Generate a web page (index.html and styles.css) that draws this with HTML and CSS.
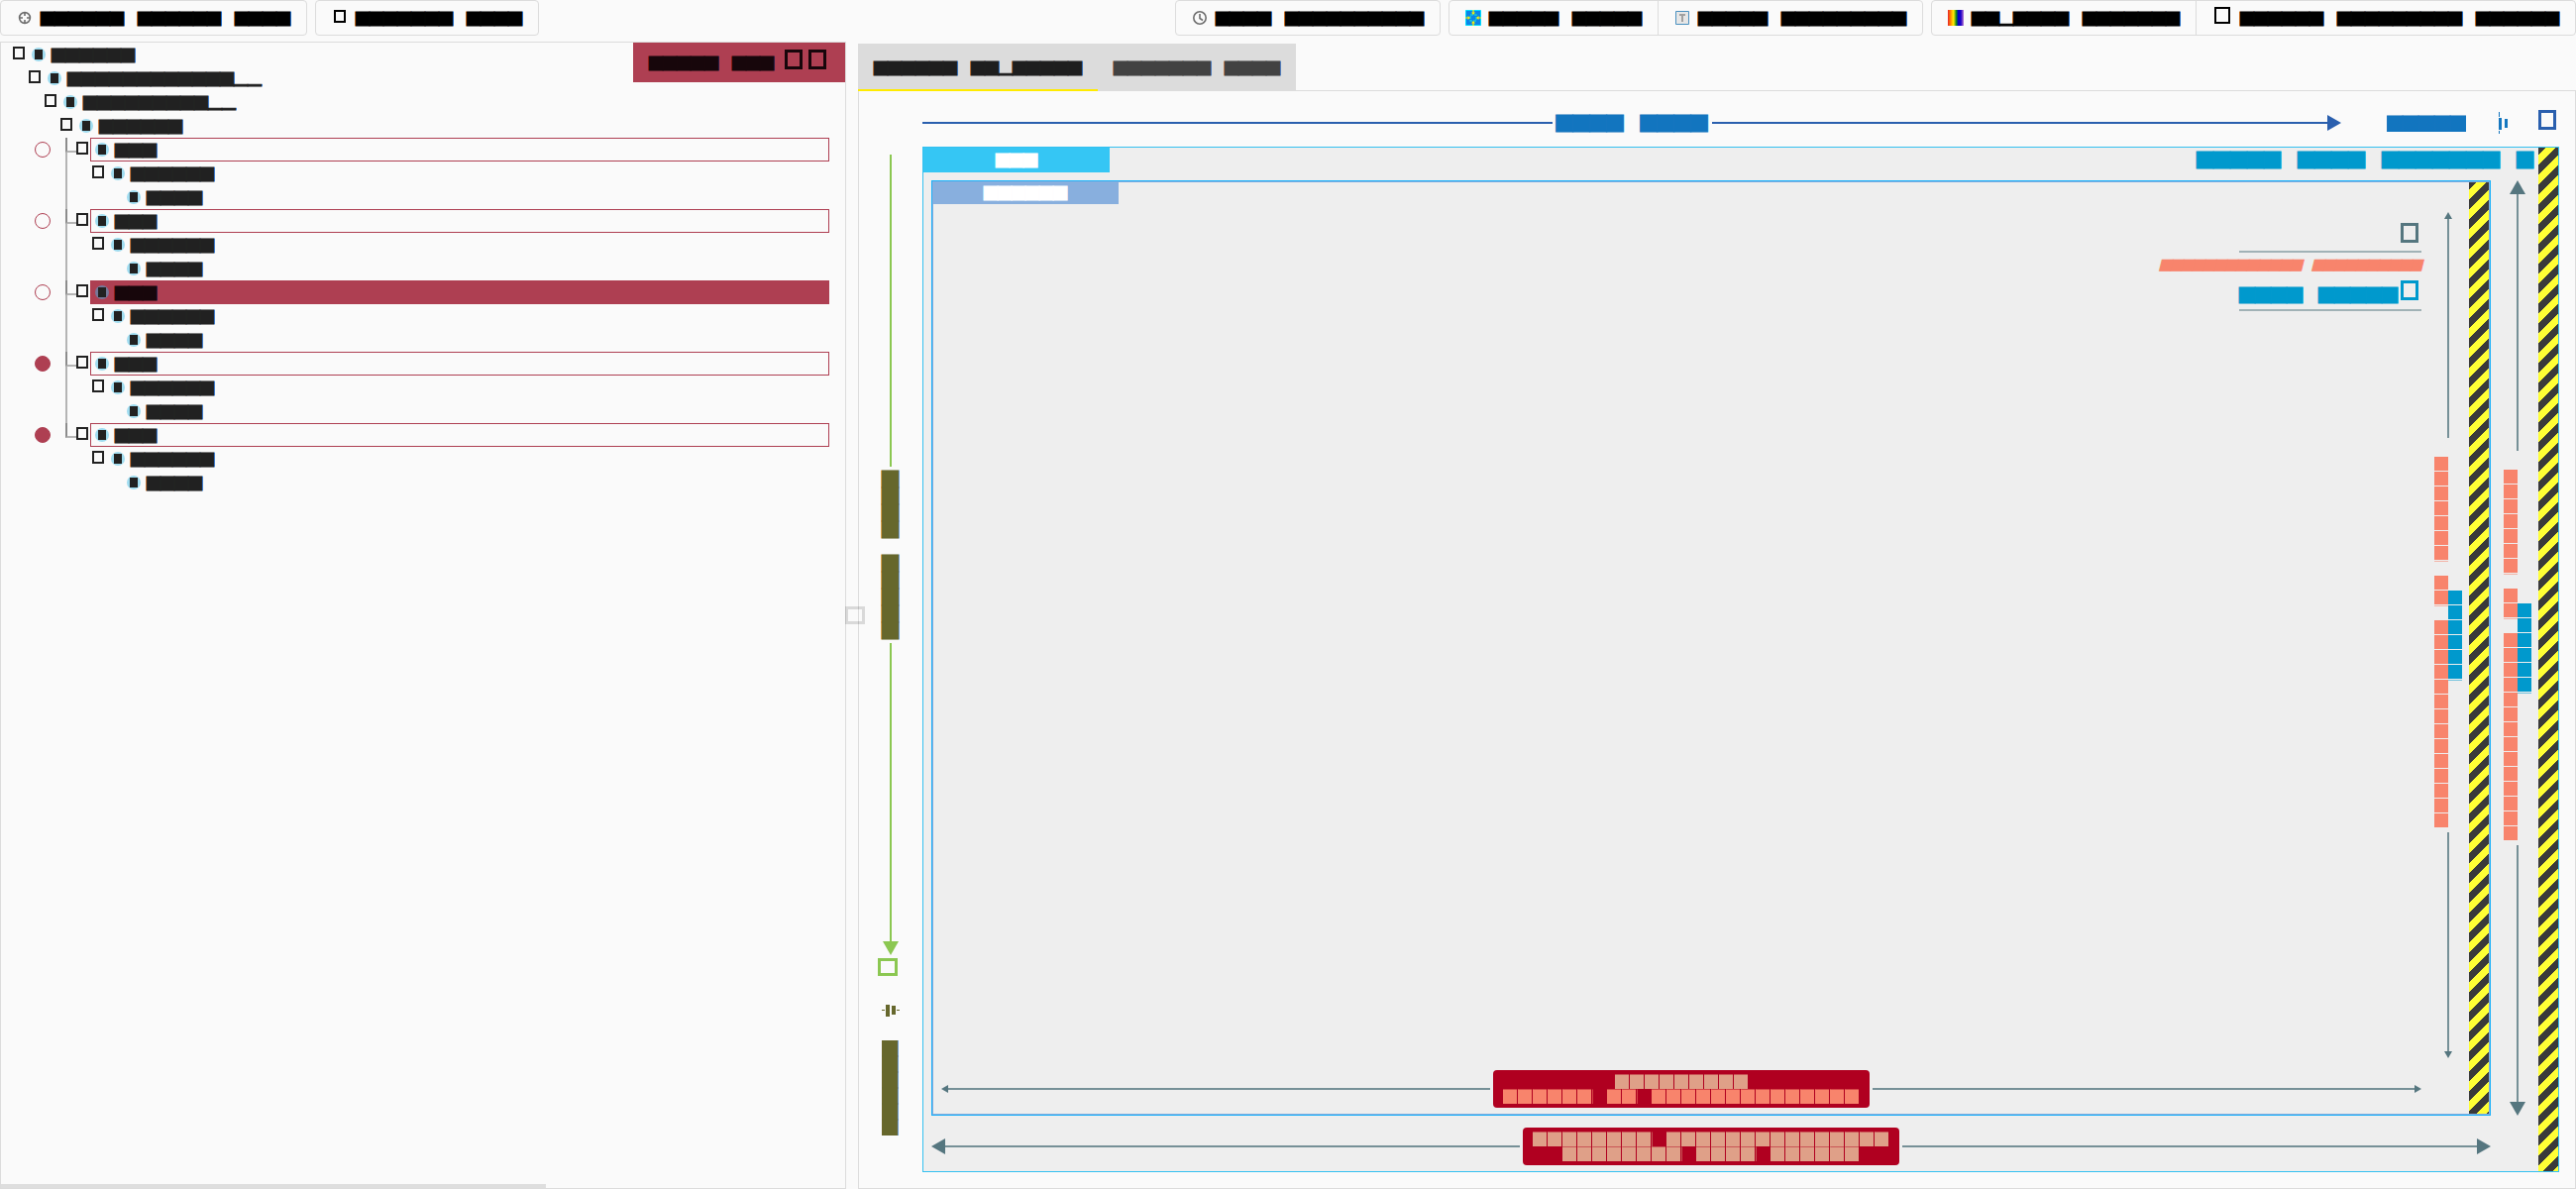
FILE: index.html
```html
<!DOCTYPE html>
<html lang="en">
<head>
<meta charset="utf-8">
<title>Inspector</title>
<link rel="stylesheet" href="styles.css">
</head>
<body>
<header class="toolbar">
  <div class="group"><button class="tool"><svg class="icon" viewBox="0 0 16 16"><g fill="none" stroke="#6e6e6e" stroke-width="1.6"><circle cx="8" cy="8" r="5.4"/><path d="M8 2v4M8 10v4M2 8h4M10 8h4"/></g></svg><span>██████　██████　████</span></button></div>
  <div class="group"><button class="tool"><span class="icon"><span class="box"></span></span><span>███████　████</span></button></div>
  <div class="spacer"></div>
  <div class="group"><button class="tool"><svg class="icon" viewBox="0 0 16 16"><g fill="none" stroke="#6e6e6e" stroke-width="1.6"><circle cx="8" cy="8" r="6.2"/><path d="M8 4v4.5l3 2"/></g></svg><span>████　██████████</span></button></div>
  <div class="group">
    <button class="tool"><svg class="icon" viewBox="0 0 16 16"><path fill="#0a84e8" stroke="#00e0ff" d="M.5.5h15v15H.5z"/><path fill="none" stroke="#16c8d8" stroke-width="1.4" stroke-dasharray="3 1" d="M5 5h6v6H5z"/><path fill="#fff000" d="M7.4 0h1.2v2.500H10L8 5 6 2.500h1.400zM7.400 16h1.200v-2.500H10L8 11l-2 2.500h1.400zM0 7.400h2.500V6L5 8l-2.500 2V8.600H0zM16 7.400h-2.500V6L11 8l2.500 2V8.600H16z"/></svg><span>█████　█████</span></button>
    <button class="tool"><svg class="icon" viewBox="0 0 16 16"><path fill="#e6e6e6" stroke="#4a90c0" d="M1.500 1.500h13v13h-13z"/><path fill="#a0a0a0" d="M5 4h6v2H9v6H7V6H5z"/></svg><span>█████　█████████</span></button>
  </div>
  <div class="group">
    <button class="tool"><span class="icon rainbow"></span><span>██▁████　███████</span></button>
    <button class="tool wide"><span class="icon"><span class="box large"></span></span><span>██████　█████████　██████</span></button>
  </div>
</header>
<main class="split">
  <section class="tree-panel">
    <ul class="tree">
      <li class="row l0"><span class="box"></span><span class="label"><i class="dot"></i>██████</span></li>
      <li class="row l1"><span class="box"></span><span class="label"><i class="dot"></i>████████████▁▁</span></li>
      <li class="row l2"><span class="box"></span><span class="label"><i class="dot"></i>█████████▁▁</span></li>
      <li class="row l3"><span class="box"></span><span class="label"><i class="dot"></i>██████</span></li>
      <li class="row child"><span class="mark"></span><span class="box"></span><span class="label"><i class="dot"></i>███</span></li>
      <li class="row l5 rail"><span class="box"></span><span class="label"><i class="dot"></i>██████</span></li>
      <li class="row l6 rail"><span class="label"><i class="dot"></i>████</span></li>
      <li class="row child"><span class="mark"></span><span class="box"></span><span class="label"><i class="dot"></i>███</span></li>
      <li class="row l5 rail"><span class="box"></span><span class="label"><i class="dot"></i>██████</span></li>
      <li class="row l6 rail"><span class="label"><i class="dot"></i>████</span></li>
      <li class="row child selected"><span class="mark"></span><span class="box"></span><span class="label"><i class="dot"></i>███</span></li>
      <li class="row l5 rail"><span class="box"></span><span class="label"><i class="dot"></i>██████</span></li>
      <li class="row l6 rail"><span class="label"><i class="dot"></i>████</span></li>
      <li class="row child"><span class="mark full"></span><span class="box"></span><span class="label"><i class="dot"></i>███</span></li>
      <li class="row l5 rail"><span class="box"></span><span class="label"><i class="dot"></i>██████</span></li>
      <li class="row l6 rail"><span class="label"><i class="dot"></i>████</span></li>
      <li class="row child last"><span class="mark full"></span><span class="box"></span><span class="label"><i class="dot"></i>███</span></li>
      <li class="row l5"><span class="box"></span><span class="label"><i class="dot"></i>██████</span></li>
      <li class="row l6"><span class="label"><i class="dot"></i>████</span></li>
    </ul>
    <button class="follow"><span>█████　███</span><span class="box"></span><span class="box"></span></button>
    <div class="scrollbar"></div>
  </section>
  <div class="divider"><span class="box"></span></div>
  <section class="details">
    <nav class="tabs">
      <button class="tab active">██████　██▁█████</button>
      <button class="tab">███████　████</button>
    </nav>
    <div class="explorer">
      <div class="main-axis">
        <div class="run"><i class="line"></i></div><span class="axis-name">████　████</span><div class="run"><i class="line"></i><i class="head right"></i></div>
        <div class="align">
          <select aria-label="Main axis alignment"><option>█████</option></select>
          <svg width="10" height="22" viewBox="0 0 10 22"><path fill="#1677bf" d="M0 0h1v5H0zM0 6h3v12H0zM0 19h1v3H0zM6 7h3v9H6z"/></svg>
          <span class="box"></span>
        </div>
      </div>
      <div class="cross-axis">
        <div class="run"><i class="line"></i></div><span class="axis-name">████　█████</span><div class="run"><i class="line"></i><i class="head down"></i></div>
        <span class="box"></span>
        <svg width="18" height="12" viewBox="0 0 18 12"><path fill="#66672c" d="M0 5h3v1H0zM4 0h4v12H4zM10 1h4v9h-4zM15 5h3v1h-3z"/></svg>
        <select aria-label="Cross axis alignment"><option>██████</option></select>
      </div>
      <div class="outer">
        <div class="outer-head"><h2 class="title">███</h2><span class="factor">█████　████　███████　█</span></div>
        <div class="inner">
          <div class="inner-body">
            <h3 class="title">██████</h3>
            <div class="flex-info">
              <span class="box"></span>
              <hr>
              <em>█████████████　██████████</em>
              <span class="fit">████　█████<span class="box"></span></span>
              <hr>
            </div>
          </div>
          <div class="dim v small">
            <i class="head up"></i><i class="line"></i>
            <p class="size"><span class="blue">██████</span><span>　███████　██　██████████████</span></p>
            <i class="line"></i><i class="head down"></i>
          </div>
          <div class="dim h small">
            <i class="head left"></i><i class="line"></i>
            <p class="size"><span class="sand">█████████</span><span>██████　██　██████████████</span></p>
            <i class="line"></i><i class="head right"></i>
          </div>
          <div class="stripes"></div>
        </div>
        <div class="dim v large">
          <i class="head up"></i><i class="line"></i>
          <p class="size"><span class="blue">██████</span><span>　███████　██　██████████████</span></p>
          <i class="line"></i><i class="head down"></i>
        </div>
        <div class="dim h large">
          <i class="head left"></i><i class="line"></i>
          <p class="size"><span class="sand">████████　███████████████</span><span class="sand">████████　████　██████</span></p>
          <i class="line"></i><i class="head right"></i>
        </div>
        <div class="stripes"></div>
      </div>
    </div>
  </section>
</main>
</body>
</html>
```
FILE: styles.css
```css
* { box-sizing: border-box; }
body {
  margin: 0;
  min-height: 100vh;
  display: flex;
  flex-direction: column;
  background: #fafafa;
  color: #212121;
  font: 14px/16px "Noto Sans CJK JP", sans-serif;
  -webkit-text-stroke: 1px;
}
button, select {
  appearance: none;
  margin: 0;
  padding: 0;
  border: 0;
  border-radius: 0;
  background: none;
  color: inherit;
  font: inherit;
  white-space: nowrap;
}
ul, p, h2, h3 { margin: 0; padding: 0; font: inherit; }
i { font-style: normal; }
.box { flex: none; width: 12px; height: 13px; border: 2px solid; }

/* Toolbar */
.toolbar { display: flex; gap: 8px; height: 36px; margin-bottom: 6px; color: #000; }
.spacer { flex: 1; }
.group { display: flex; border: 1px solid #dcdcdc; border-radius: 4px; }
.tool { display: flex; align-items: center; gap: 8px; padding: 0 16px; -webkit-text-stroke: 1px; }
.tool + .tool { border-left: 1px solid #dcdcdc; }
.tool.wide { gap: 10px; padding-left: 18px; }
.icon { display: flex; flex: none; align-items: center; justify-content: center; width: 16px; height: 16px; }
.icon .box { margin-bottom: 3px; }
.icon .large { width: 16px; height: 17px; margin-bottom: 5px; }
.rainbow { background: linear-gradient(90deg, #e8202a, #ff8c00 18%, #fff000 36%, #0a8020 54%, #0000c8 66%, #2000c8 82%, #c080d0); }

.split { flex: 1; display: grid; grid-template-columns: 854px 12px 1fr; }

/* Widget tree */
.tree-panel { position: relative; border: 1px solid #dcdcdc; }
.tree { list-style: none; }
.row { position: relative; display: flex; align-items: center; height: 24px; padding: 0 16px 0 12px; }
.row > .box { margin-right: 2px; margin-bottom: 3px; }
.label { flex: 1; display: flex; align-items: center; gap: 6px; height: 24px; padding-left: 5px; }
.dot { width: 14px; height: 14px; border-radius: 7px; background: linear-gradient(#212121, #212121) center / 8px 10px no-repeat #9fdcf0; }
.l1 { padding-left: 28px; }
.l2 { padding-left: 44px; }
.l3 { padding-left: 60px; }
.l5 { padding-left: 92px; }
.l6 { padding-left: 122px; }
.child { padding-left: 34px; }
.mark { width: 16px; height: 16px; margin-right: 26px; border: 1px solid #ae3f52; border-radius: 8px; }
.mark.full { background: #ae3f52; }
.child .label { padding-left: 4px; border: 1px solid #ae3f52; }
.selected .label { background: #ae3f52; color: #17060b; }
.selected .dot { background-color: #76789a; }
.rail::before, .child::before { content: ""; position: absolute; left: 65px; top: 0; bottom: 0; width: 2px; background: #b4b4b4; }
.child.last::before { bottom: 12px; }
.child::after { content: ""; position: absolute; left: 65px; top: 0; width: 9px; height: 13px; border: solid #b4b4b4; border-width: 0 0 2px 2px; border-left-color: #8c8c8c; }
.follow { position: absolute; top: 0; right: 0; display: flex; align-items: center; height: 40px; padding: 0 19px 0 16px; background: #ae3f52; color: #17060b; -webkit-text-stroke: 1px; }
.follow .box { width: 18px; height: 20px; margin: 0 0 6px 6px; border-width: 3px; }
.follow span + .box { margin-left: 11px; }
.follow .box + .box { margin-left: 6px; }
.scrollbar { position: absolute; left: 0; bottom: 0; width: 550px; height: 4px; background: #dedede; }

.divider { position: relative; }
.divider .box { position: absolute; left: -1px; top: 50%; width: 20px; height: 18px; margin-top: -9px; border-width: 3px; color: rgba(0, 0, 0, .13); z-index: 1; }

/* Details */
.details { display: flex; flex-direction: column; padding-top: 2px; }
.tabs { display: flex; height: 48px; margin-bottom: -1px; z-index: 1; }
.tab { padding: 0 16px; background: #dcdcdc; color: #424242; -webkit-text-stroke: 1px; }
.tab.active { color: #1e1e1e; box-shadow: inset 0 -2px #ffeb00; }
.explorer { flex: 1; display: grid; grid-template: 56px 1fr / 64px 1fr; padding: 0 16px 16px 0; border: 1px solid #dcdcdc; }
.axis-name { font-size: 17px; line-height: 18px; white-space: pre; }
.line { flex: 1; background: currentColor; }
.run { flex: 1 1 0; display: flex; align-items: center; }
.head { flex: none; width: 14px; height: 16px; background: currentColor; }
.head.right { clip-path: polygon(0 0, 100% 50%, 0 100%); }
.head.left { clip-path: polygon(100% 0, 0 50%, 100% 100%); }
.head.down { width: 16px; height: 14px; clip-path: polygon(0 0, 100% 0, 50% 100%); }
.head.up { width: 16px; height: 14px; clip-path: polygon(50% 0, 100% 100%, 0 100%); }
.main-axis { grid-column: 2; display: flex; align-items: center; height: 64px; color: #2a5fae; }
.main-axis .line { height: 2px; }
.main-axis .axis-name { margin: 0 4px; color: #1275bf; }
.align { display: flex; align-items: center; width: 220px; padding: 0 3px 0 46px; }
.align select { width: 80px; margin-right: auto; font-size: 16px; line-height: 18px; color: #1275bf; -webkit-text-stroke: 1px; }
.align .box { width: 18px; height: 20px; margin: 0 0 6px 30px; border-width: 3px; }
.cross-axis { display: flex; flex-direction: column; align-items: center; padding-top: 8px; color: #8bc751; }
.cross-axis .run { flex-direction: column; }
.cross-axis .line { width: 2px; }
.cross-axis .axis-name { margin: 4px 0; writing-mode: vertical-rl; color: #66672c; }
.cross-axis .box { width: 20px; height: 18px; margin: 3px 6px 29px 0; border-width: 3px; }
.cross-axis select { height: 96px; margin: 24px 0 37px; writing-mode: vertical-rl; font-size: 16px; line-height: 18px; color: #66672c; -webkit-text-stroke: 1px; }

.outer { display: grid; grid-template: 33px 1fr 56px / 8px 1fr 48px 20px; border: 1px solid #35c0f0; background: #eee; }
.outer-head { grid-column: 1 / 4; display: flex; justify-content: space-between; }
.title { width: 188px; height: 25px; background: #35c6f4; color: #fff; line-height: 24px; text-align: center; }
.factor { padding: 3px 5px 0 0; font-size: 17px; line-height: 18px; color: #0099cd; }
.stripes {
  grid-column: 4;
  grid-row: 1 / 4;
  background: linear-gradient(135deg, #3a3a3a 25%, #ffff35 25% 50%, #3a3a3a 50% 75%, #ffff35 75%) -2px 0 / 20px 20px;
}
.inner {
  grid-column: 2;
  display: grid;
  grid-template: 1fr 45px / 1fr 42px 20px;
  row-gap: 12px;
  border: 1px solid #18b0fa;
  box-shadow: inset 0 0 0 1px #88afde;
}
.inner .title { height: 23px; background: #88afde; line-height: 22px; }
.inner-body { display: flex; flex-direction: column; }
.inner .stripes { grid-column: 3; grid-row: 1 / 3; margin: 1px 1px 1px -1px; }
.flex-info { align-self: flex-end; display: flex; flex-direction: column; align-items: flex-end; margin: 19px 7px 0 0; color: #55767f; }
.flex-info hr { width: 184px; height: 2px; margin: 0; border: 0; background: #a1b2b6; }
.flex-info .box { width: 18px; height: 20px; border-width: 3px; margin: 0 3px 8px 0; }
.flex-info em { padding: 6px 0; font-size: 11px; line-height: 12px; color: #f8846c; }
.fit { display: flex; align-items: center; margin: 4px 0 1px; font-size: 16px; line-height: 18px; color: #0099cd; }
.flex-info .fit .box { margin-left: 3px; }

/* Size rulers */
.dim { display: flex; align-items: center; color: #55767f; }
.dim .line { opacity: .78; }
.dim.h { grid-column: 2; }
.dim.h .line { height: 2px; }
.dim.h.large { padding-top: 6px; }
.dim.v { flex-direction: column; }
.dim.v .line { width: 2px; }
.dim.v.large { padding-left: 6px; }
.dim.v.small { padding: 31px 2px 0 0; }
.dim.h.small { grid-column: 1; align-self: start; height: 38px; margin: 0 7px 0 9px; }
.small .head.up, .small .head.down { width: 8px; height: 7px; }
.small .head.left, .small .head.right { width: 7px; height: 8px; }
.size { font-size: 15px; line-height: 14px; color: #f8846c; white-space: pre; }
.size span { display: block; }
.size .blue { color: #0099cd; }
.size .sand { color: #dfa088; }
.v .size { writing-mode: vertical-rl; margin: 4px 0; text-align: center; }
.v .size span { mask: repeating-linear-gradient(180deg, #000 0 14px, transparent 14px 15px); }
.h .size { margin: 0 3px; padding: 4px 10px; border-radius: 4px; background: #b00020; line-height: 15px; text-align: center; }
.h .size span { width: fit-content; margin: 0 auto; mask: repeating-linear-gradient(90deg, #000 0 14px, transparent 14px 15px); }
```
